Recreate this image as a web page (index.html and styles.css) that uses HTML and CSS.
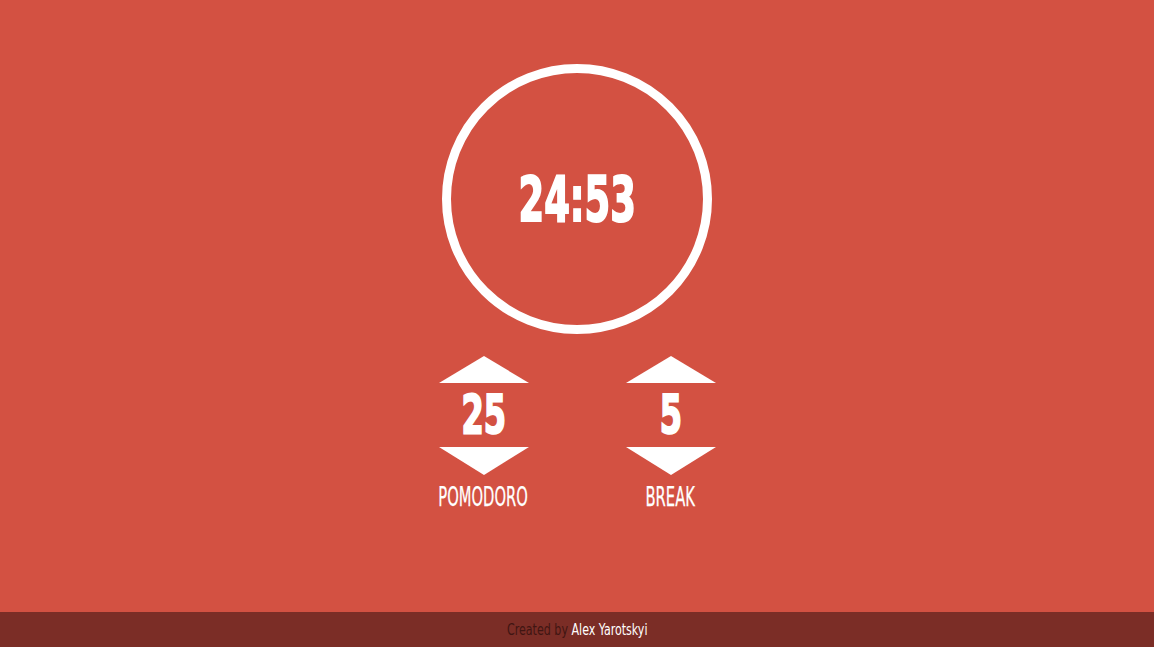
FILE: index.html
```html
<!DOCTYPE html>
<html lang="en">
<head>
<meta charset="utf-8">
<title>Pomodoro Clock</title>
<link rel="stylesheet" href="styles.css">
</head>
<body>
<main class="app">
  <div class="clock">
    <span class="clock-time">24:53</span>
  </div>
  <div class="controls">
    <div class="control">
      <svg class="arrow" width="90" height="27" viewBox="0 0 90 27"><polygon points="0,27 45,0 90,27" fill="#fff"/></svg>
      <div class="value"><span class="squeeze">25</span></div>
      <svg class="arrow" width="90" height="28" viewBox="0 0 90 28"><polygon points="0,0 90,0 45,28" fill="#fff"/></svg>
      <div class="label"><span class="squeeze-lbl">POMODORO</span></div>
    </div>
    <div class="control">
      <svg class="arrow" width="90" height="27" viewBox="0 0 90 27"><polygon points="0,27 45,0 90,27" fill="#fff"/></svg>
      <div class="value"><span class="squeeze">5</span></div>
      <svg class="arrow" width="90" height="28" viewBox="0 0 90 28"><polygon points="0,0 90,0 45,28" fill="#fff"/></svg>
      <div class="label"><span class="squeeze-lbl">BREAK</span></div>
    </div>
  </div>
</main>
<footer class="footer">
  <span class="footer-text"><span class="muted">Created by</span> <span class="author">Alex Yarotskyi</span></span>
</footer>
</body>
</html>
```
FILE: styles.css
```css
html, body {
  margin: 0;
  padding: 0;
  height: 100%;
}
body {
  background: #d35142;
  color: #fff;
  font-family: "DejaVu Sans Condensed", "DejaVu Sans", sans-serif;
  display: flex;
  flex-direction: column;
  min-height: 100vh;
}
.app {
  flex: 1;
  display: flex;
  flex-direction: column;
  align-items: center;
  padding-top: 64px;
}
.clock {
  width: 270px;
  height: 270px;
  box-sizing: border-box;
  border: 9px solid #fff;
  border-radius: 50%;
  display: flex;
  align-items: center;
  justify-content: center;
}
.clock-time {
  display: inline-block;
  font-weight: 700;
  font-size: 63px;
  line-height: 1;
  transform: scaleX(0.65);
  -webkit-text-stroke: 2px #fff;
}
.controls {
  display: flex;
  gap: 97px;
  margin-top: 22px;
}
.control {
  width: 90px;
  display: flex;
  flex-direction: column;
  align-items: center;
}
.arrow {
  display: block;
}
.value {
  height: 64px;
  line-height: 64px;
  font-size: 54px;
  font-weight: 700;
  text-align: center;
}
.squeeze {
  display: inline-block;
  transform: scaleX(0.66);
  -webkit-text-stroke: 2px #fff;
}
.label {
  margin-top: 7px;
  font-size: 26px;
  line-height: 30px;
  white-space: nowrap;
  text-align: center;
}
.squeeze-lbl {
  display: inline-block;
  transform: scaleX(0.63);
  -webkit-text-stroke: 0.25px #fff;
}
.footer {
  height: 35px;
  background: #7b2d26;
  display: flex;
  align-items: center;
  justify-content: center;
  font-size: 16px;
  line-height: 33px;
}
.footer-text {
  display: inline-block;
  transform: scaleX(0.77);
  white-space: nowrap;
}
.muted {
  color: #401512;
}
.author {
  color: #fff;
}
```
